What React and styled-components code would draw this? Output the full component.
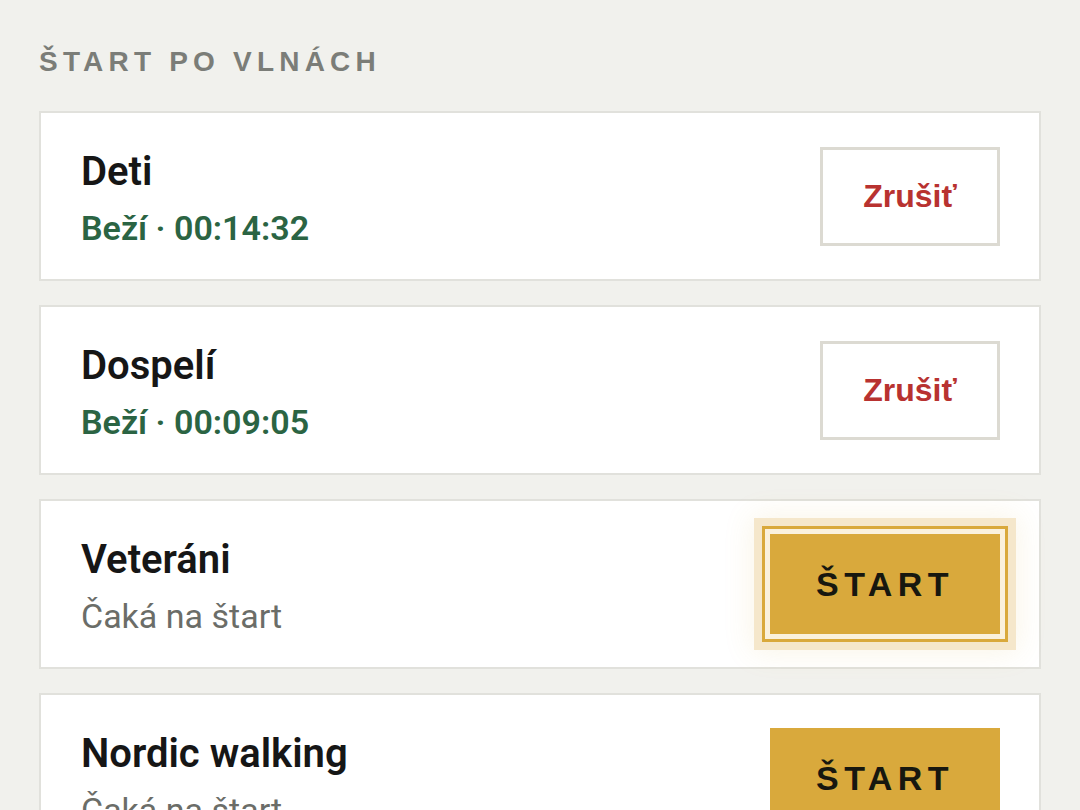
import React from "react";
import styled, { createGlobalStyle, css } from "styled-components";

const Global = createGlobalStyle`
  html, body { margin: 0; padding: 0; background: #f1f1ed; }
  body { font-family: Roboto, "Noto Sans", sans-serif; -webkit-font-smoothing: antialiased; }
  * { box-sizing: border-box; }
`;

const Page = styled.main`
  padding: 45px 39px 40px;
  min-height: 810px;
  background: #f1f1ed;
`;

const Heading = styled.h2`
  margin: 0 0 32px;
  font-family: "Liberation Sans", Arial, sans-serif;
  font-weight: 700;
  font-size: 28px;
  line-height: 34px;
  letter-spacing: 5.2px;
  text-transform: uppercase;
  color: #7b7d78;
`;

const List = styled.div`
  display: flex;
  flex-direction: column;
  gap: 24px;
`;

const Card = styled.section`
  display: flex;
  align-items: center;
  justify-content: space-between;
  background: #ffffff;
  border: 2px solid #e1e1dc;
  padding: 31px 39px 31px 40px;
`;

const Info = styled.div`
  display: flex;
  flex-direction: column;
  gap: 12px;
  margin-top: 4px;
`;

const Name = styled.div`
  font-family: Roboto, sans-serif;
  font-weight: 600;
  font-size: 40px;
  line-height: 48px;
  color: #161616;
`;

const Status = styled.div`
  font-family: Roboto, sans-serif;
  font-size: 34px;
  line-height: 40px;
  ${(p) =>
    p.$running
      ? css`
          font-weight: 600;
          color: #2b6443;
        `
      : css`
          font-weight: 400;
          color: #6b6d68;
        `}
`;

const CancelButton = styled.button`
  width: 180px;
  height: 99px;
  background: #ffffff;
  border: 3px solid #dcdad2;
  font-family: "Liberation Sans", Arial, sans-serif;
  font-weight: 700;
  font-size: 32px;
  color: #b83230;
  padding: 0;
  cursor: pointer;
`;

const StartButton = styled.button`
  width: 230px;
  height: 100px;
  background: #d9a93c;
  border: none;
  padding: 0;
  font-family: "Liberation Sans", Arial, sans-serif;
  font-weight: 700;
  font-size: 34px;
  letter-spacing: 5.4px;
  color: #17170f;
  cursor: pointer;
  ${(p) =>
    p.$focused &&
    css`
      outline: 3px solid #d9a93c;
      outline-offset: 5px;
      box-shadow: 0 0 0 5px #faf1dd, 0 0 0 16px #f5e7cb,
        0 0 28px 18px rgba(217, 169, 60, 0.12);
    `}
`;

const waves = [
  { name: "Deti", running: true, time: "00:14:32" },
  { name: "Dospelí", running: true, time: "00:09:05" },
  { name: "Veteráni", running: false, focused: true },
  { name: "Nordic walking", running: false },
];

export default function App() {
  return (
    <>
      <Global />
      <Page>
        <Heading>Štart po vlnách</Heading>
        <List>
          {waves.map((w) => (
            <Card key={w.name}>
              <Info>
                <Name>{w.name}</Name>
                <Status $running={w.running}>
                  {w.running ? `Beží · ${w.time}` : "Čaká na štart"}
                </Status>
              </Info>
              {w.running ? (
                <CancelButton>Zrušiť</CancelButton>
              ) : (
                <StartButton $focused={w.focused}>ŠTART</StartButton>
              )}
            </Card>
          ))}
        </List>
      </Page>
    </>
  );
}
